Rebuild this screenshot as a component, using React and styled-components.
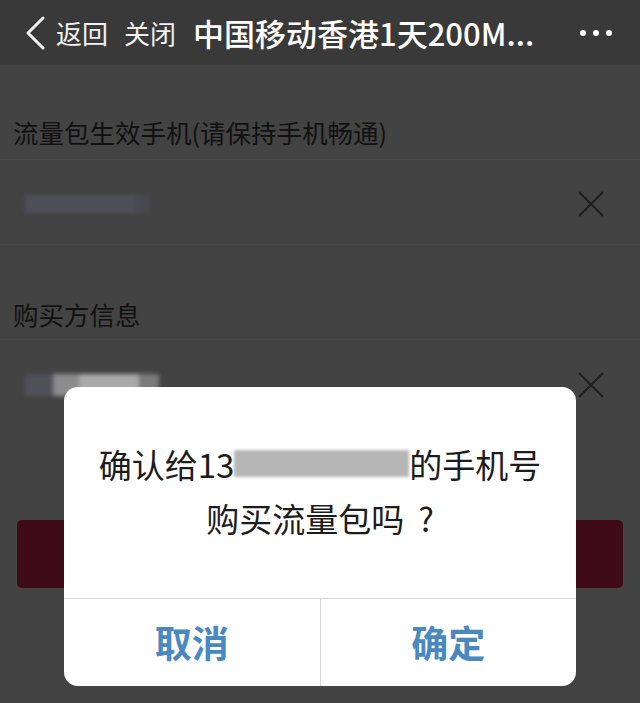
import React from "react";
import styled, { createGlobalStyle } from "styled-components";

const GlobalStyle = createGlobalStyle`
  html, body {
    margin: 0;
    padding: 0;
    background: #434343;
  }
  body {
    font-family: "Noto Sans CJK SC", "Noto Sans", sans-serif;
    -webkit-font-smoothing: antialiased;
  }
`;

const Screen = styled.div`
  position: relative;
  width: 640px;
  height: 703px;
  overflow: hidden;
  background: #434343;
`;

const NavBar = styled.div`
  height: 65px;
  display: flex;
  align-items: center;
  padding: 0 28px 0 25px;
  background: #393939;
  color: #fff;
  box-sizing: border-box;
`;

const NavLink = styled.span`
  font-size: 26px;
  line-height: 1;
  color: #f2f2f2;
  margin-left: ${(p) => p.gap || 0}px;
`;

const NavTitle = styled.span`
  flex: 1;
  font-size: 31px;
  font-weight: 500;
  line-height: 1;
  margin-left: 17px;
  white-space: nowrap;
  color: #fff;
`;

const Dots = styled.div`
  display: flex;
  gap: 7px;

  span {
    width: 6px;
    height: 6px;
    border-radius: 50%;
    background: #fff;
  }
`;

const SectionLabel = styled.div`
  height: ${(p) => p.h}px;
  box-sizing: border-box;
  padding: ${(p) => p.top}px 13px 0;
  font-size: 25.5px;
  line-height: 30px;
  color: #111;
  border-bottom: 1px solid #484848;
`;

const InputRow = styled.div`
  height: 85px;
  box-sizing: border-box;
  display: flex;
  align-items: center;
  justify-content: space-between;
  padding: 4px 36px 0 25px;
  border-bottom: ${(p) => (p.last ? "none" : "1px solid #484848")};
`;

const Redacted = styled.div`
  display: flex;
  height: ${(p) => p.h || 20}px;
  filter: blur(2px);

  span {
    display: block;
    height: 100%;
  }
`;

const SubmitButton = styled.div`
  margin: 95px 17px 0;
  height: 68px;
  border-radius: 5px;
  background: #3f0b1b;
`;

const Dialog = styled.div`
  position: absolute;
  left: 64px;
  top: 387px;
  width: 512px;
  height: 299px;
  border-radius: 14px;
  background: #fff;
  display: flex;
  flex-direction: column;
  overflow: hidden;
`;

const Message = styled.div`
  height: 212px;
  display: flex;
  flex-direction: column;
  justify-content: center;
  align-items: center;
  font-size: 33px;
  line-height: 54px;
  color: #1c1c1c;
  border-bottom: 1px solid #d6d6d6;
  box-sizing: border-box;
  padding-bottom: 4px;
`;

const Line = styled.div`
  display: flex;
  align-items: center;
  white-space: nowrap;
`;

const Hidden = styled.span`
  display: inline-block;
  width: 175px;
  height: 27px;
  background: #b6b6b6;
  filter: blur(1.5px);
`;

const Question = styled.span`
  padding-left: 14px;
`;

const Actions = styled.div`
  flex: 1;
  display: flex;
`;

const Action = styled.div`
  flex: 1;
  display: flex;
  align-items: center;
  justify-content: center;
  font-size: 37px;
  font-weight: 600;
  color: #4a88c0;
  padding-bottom: 2px;
  border-left: ${(p) => (p.divided ? "1px solid #d6d6d6" : "none")};
`;

const CloseIcon = () => (
  <svg width="26" height="26" viewBox="0 0 26 26">
    <path d="M1 1 L25 25 M25 1 L1 25" stroke="#1f1f1f" strokeWidth="2" fill="none" />
  </svg>
);

const BackIcon = () => (
  <svg width="20" height="34" viewBox="0 0 20 34">
    <path d="M18 2 L3 17 L18 32" stroke="#f2f2f2" strokeWidth="3" fill="none" strokeLinecap="round" strokeLinejoin="round" />
  </svg>
);

export default function App() {
  return (
    <>
      <GlobalStyle />
      <Screen>
        <NavBar>
          <BackIcon />
          <NavLink gap={11}>返回</NavLink>
          <NavLink gap={16}>关闭</NavLink>
          <NavTitle>中国移动香港1天200M...</NavTitle>
          <Dots>
            <span />
            <span />
            <span />
          </Dots>
        </NavBar>

        <SectionLabel h={95} top={52}>
          流量包生效手机(请保持手机畅通)
        </SectionLabel>
        <InputRow>
          <Redacted h={18}>
            <span style={{ width: 110, background: "#4e4e57" }} />
            <span style={{ width: 15, background: "#494950" }} />
          </Redacted>
          <CloseIcon />
        </InputRow>

        <SectionLabel h={95} top={54}>
          购买方信息
        </SectionLabel>
        <InputRow last>
          <Redacted h={22}>
            <span style={{ width: 28, background: "#505058" }} />
            <span style={{ width: 26, background: "#8c8c8c" }} />
            <span style={{ width: 60, background: "#a9a9a9" }} />
            <span style={{ width: 20, background: "#7a7a7a" }} />
          </Redacted>
          <CloseIcon />
        </InputRow>

        <SubmitButton />

        <Dialog>
          <Message>
            <Line>
              确认给13<Hidden />的手机号
            </Line>
            <Line>
              购买流量包吗<Question>?</Question>
            </Line>
          </Message>
          <Actions>
            <Action>取消</Action>
            <Action divided>确定</Action>
          </Actions>
        </Dialog>
      </Screen>
    </>
  );
}
